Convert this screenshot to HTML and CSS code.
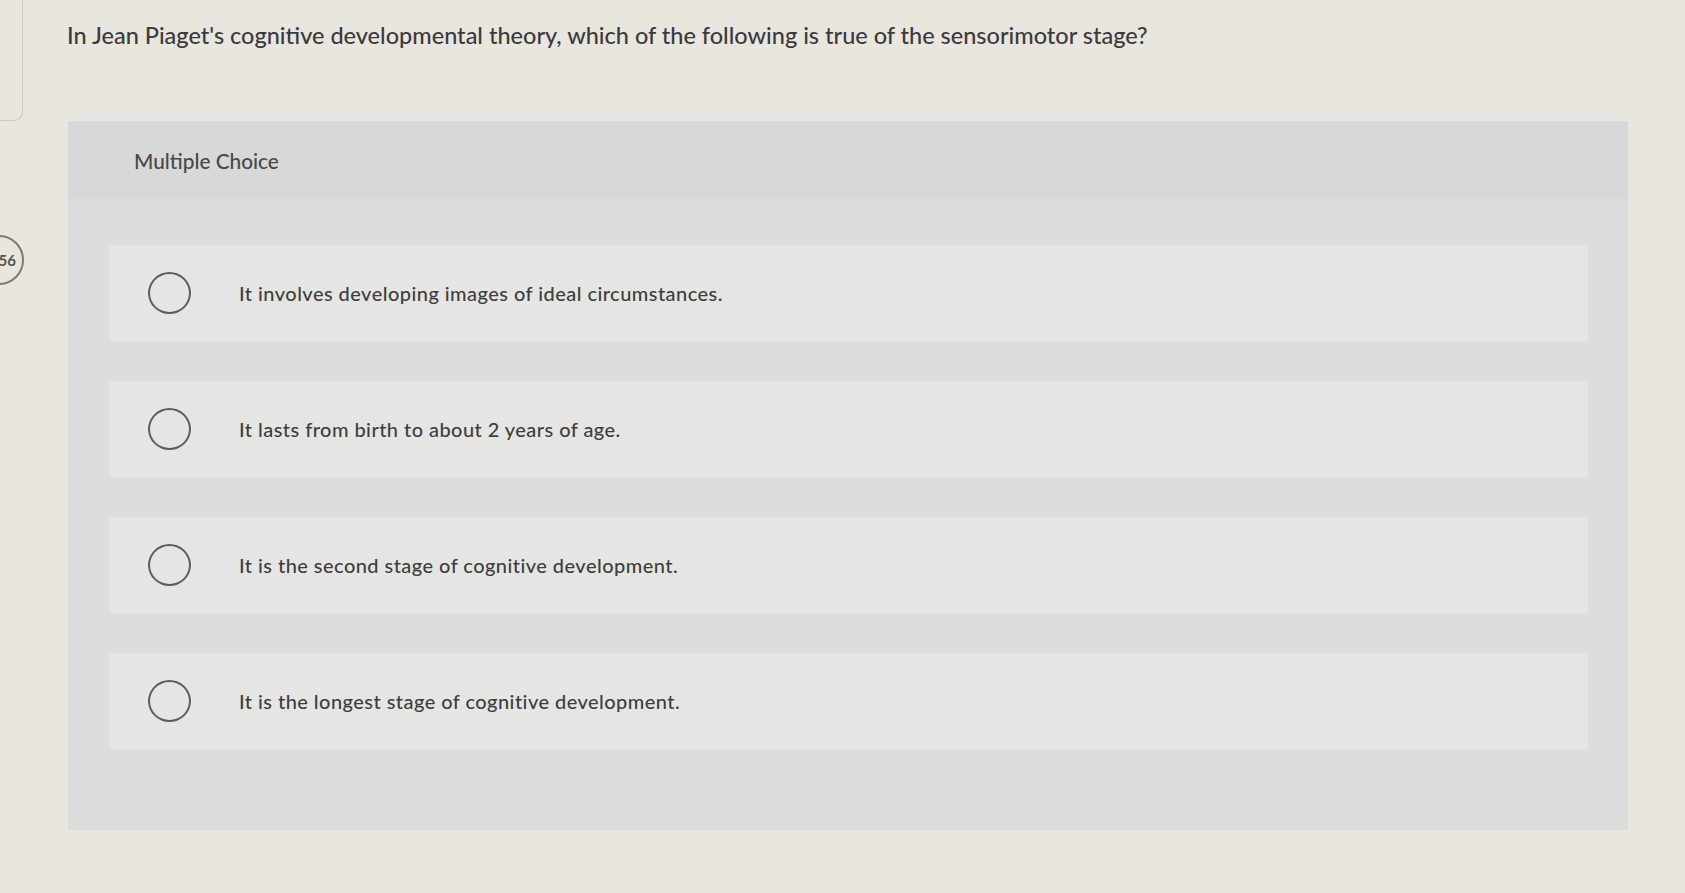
FILE: index.html
```html
<!DOCTYPE html>
<html lang="en">
<head>
<meta charset="utf-8">
<title>Multiple Choice</title>
<link rel="stylesheet" href="styles.css">
</head>
<body>
<div class="page">
  <aside class="gutter">
    <div class="side-box"></div>
    <div class="q-badge"><span>56</span></div>
  </aside>
  <main class="content">
    <p class="question">In Jean Piaget's cognitive developmental theory, which of the following is true of the sensorimotor stage?</p>
    <section class="panel">
      <header class="panel-head">Multiple Choice</header>
      <div class="options">
        <label class="option"><span class="radio"></span><span class="opt-text">It involves developing images of ideal circumstances.</span></label>
        <label class="option"><span class="radio"></span><span class="opt-text">It lasts from birth to about 2 years of age.</span></label>
        <label class="option"><span class="radio"></span><span class="opt-text">It is the second stage of cognitive development.</span></label>
        <label class="option"><span class="radio"></span><span class="opt-text">It is the longest stage of cognitive development.</span></label>
      </div>
    </section>
  </main>
</div>
</body>
</html>
```
FILE: styles.css
```css
html, body {
  margin: 0;
  padding: 0;
}
body {
  background: #e9e6df;
  font-family: Lato, "Open Sans", "Liberation Sans", sans-serif;
  font-weight: 500;
  color: #3c3a3d;
  width: 1685px;
  height: 893px;
  overflow: hidden;
}
.page {
  display: flex;
  align-items: flex-start;
}
.gutter {
  width: 68px;
  flex: none;
  position: relative;
  height: 893px;
}
.side-box {
  width: 23px;
  height: 121px;
  box-sizing: border-box;
  border-right: 1.5px solid #cbc8c1;
  border-bottom: 1.5px solid #cbc8c1;
  border-bottom-right-radius: 9px;
}
.q-badge {
  position: absolute;
  left: -26px;
  top: 235px;
  width: 50px;
  height: 50px;
  box-sizing: border-box;
  border: 2px solid #7d7a74;
  border-radius: 50%;
  display: flex;
  align-items: center;
  justify-content: flex-end;
  padding-right: 6px;
  font-size: 15px;
  font-weight: 700;
  color: #55524f;
}
.content {
  flex: none;
  width: 1560px;
}
.question {
  margin: 21px 0 0 -1px;
  font-size: 23.5px;
  line-height: 29px;
  letter-spacing: 0;
}
.panel {
  margin-top: 71px;
  background: #dcdedc;
  height: 709px;
}
.panel-head {
  height: 78px;
  display: flex;
  align-items: center;
  padding-left: 66px;
  background: #d6d9d8;
  font-size: 20.8px;
  color: #4a474b;
}
.options {
  padding: 46px 40px 0 41px;
  display: flex;
  flex-direction: column;
  gap: 40px;
}
.option {
  height: 96px;
  display: flex;
  align-items: center;
  padding-left: 39px;
  background: #e5e6e3;
}
.radio {
  width: 43px;
  height: 42px;
  box-sizing: border-box;
  border: 2px solid #5e5c5c;
  border-radius: 50%;
  flex: none;
}
.opt-text {
  margin-left: 48px;
  font-size: 20px;
  letter-spacing: 0.45px;
  color: #3f3d40;
}
```
